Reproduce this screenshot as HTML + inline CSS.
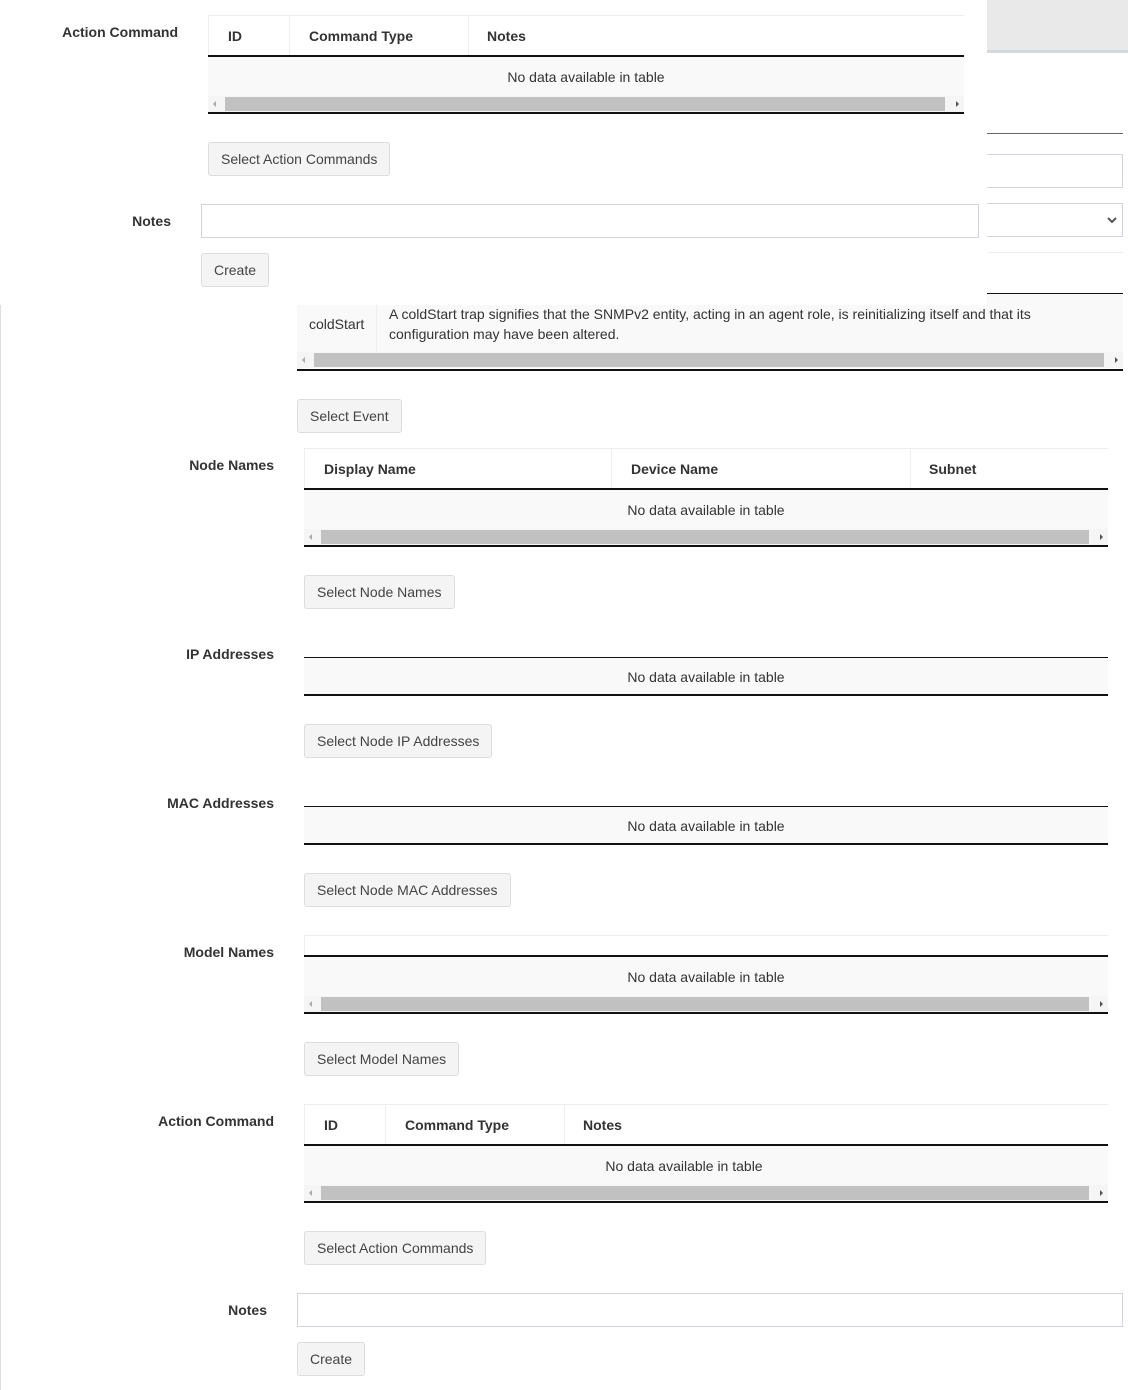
<!DOCTYPE html>
<html><head><meta charset="utf-8"><style>
*{box-sizing:border-box;margin:0;padding:0}
body{width:1128px;height:1390px;position:relative;background:#fff;font-family:"Liberation Sans",Arial,sans-serif;font-size:14px;color:#333;overflow:hidden}
.a{position:absolute}
.lbl{position:absolute;font-weight:bold;text-align:right;color:#333}
.btn{position:absolute;height:34px;background:#f4f4f4;border:1px solid #ddd;border-radius:3px;line-height:32px;padding:0 12px;color:#444;white-space:nowrap}
.th{position:absolute;font-weight:bold;color:#333}
.row{position:absolute;background:#f9f9f9;text-align:center;color:#333}
.sb{position:absolute;height:16px;background:#f5f5f5}
.sb .t{position:absolute;left:17px;right:19px;top:1px;height:14px;background:#c1c1c1}
.sb .l{position:absolute;left:5px;top:5px;border:3px solid transparent;border-right:3px solid #aaa;border-left:0}
.sb .r{position:absolute;right:5px;top:5px;border:3px solid transparent;border-left:3px solid #555;border-right:0}
.dk{position:absolute;height:2px;background:#111}
.lt{position:absolute;height:1px;background:#eee}
.vs{position:absolute;width:1px;background:#eee}
.inp{position:absolute;border:1px solid #d0d3da;background:#fff}
</style></head><body>

<div class="a" style="left:987px;top:0;width:141px;height:50px;background:#e9e9e9"></div>
<div class="a" style="left:987px;top:50px;width:141px;height:3px;background:#d3d9e1"></div>
<div class="a" style="left:987px;top:133px;width:136px;height:1px;background:#666"></div>
<div class="inp" style="left:980px;top:154px;width:143px;height:34px"></div>
<div class="inp" style="left:980px;top:203px;width:143px;height:34px"></div>
<svg class="a" style="left:1107px;top:216px" width="10" height="8" viewBox="0 0 10 8"><path d="M1 2 L5 6 L9 2" stroke="#555" stroke-width="2" fill="none"/></svg>
<div class="a" style="left:987px;top:252px;width:136px;height:1px;background:#eee"></div>
<div class="a" style="left:987px;top:293px;width:136px;height:1px;background:#111"></div>
<div class="a" style="left:0;top:305px;width:1px;height:1085px;background:#ddd"></div>

<div class="row" style="left:297px;top:294px;width:826px;height:58px"></div>
<div class="vs" style="left:376px;top:305px;height:47px"></div>
<div class="a" style="left:309px;top:316px">coldStart</div>
<div class="a" style="left:389px;top:304px;width:700px;line-height:20px">A coldStart trap signifies that the SNMPv2 entity, acting in an agent role, is reinitializing itself and that its configuration may have been altered.</div>
<div class="sb" style="left:297px;top:352px;width:826px"><div class="t"></div><div class="l"></div><div class="r"></div></div>
<div class="dk" style="left:297px;top:369px;width:826px"></div>

<div class="a" style="left:0;top:0;width:987px;height:305px;background:#fff"></div>
<div class="lbl" style="left:40px;top:24px;width:138px">Action Command</div>
<div class="lt" style="left:208px;top:15px;width:756px"></div>
<div class="vs" style="left:208px;top:15px;height:41px"></div>
<div class="vs" style="left:289px;top:15px;height:41px"></div>
<div class="vs" style="left:468px;top:15px;height:41px"></div>
<div class="th" style="left:228px;top:28px">ID</div>
<div class="th" style="left:309px;top:28px">Command Type</div>
<div class="th" style="left:487px;top:28px">Notes</div>
<div class="dk" style="left:208px;top:55px;width:756px"></div>
<div class="row" style="left:208px;top:57px;width:756px;height:39px;line-height:40px">No data available in table</div>
<div class="sb" style="left:208px;top:96px;width:756px"><div class="t"></div><div class="l"></div><div class="r"></div></div>
<div class="dk" style="left:208px;top:112px;width:756px"></div>
<div class="btn" style="left:208px;top:142px">Select Action Commands</div>
<div class="lbl" style="left:60px;top:213px;width:111px">Notes</div>
<div class="inp" style="left:201px;top:204px;width:778px;height:34px"></div>
<div class="btn" style="left:201px;top:253px">Create</div>

<div class="btn" style="left:297px;top:399px">Select Event</div>

<div class="lbl" style="left:100px;top:457px;width:174px">Node Names</div>
<div class="lt" style="left:304px;top:448px;width:804px"></div>
<div class="vs" style="left:304px;top:448px;height:41px"></div>
<div class="vs" style="left:611px;top:448px;height:41px"></div>
<div class="vs" style="left:910px;top:448px;height:41px"></div>
<div class="th" style="left:324px;top:461px">Display Name</div>
<div class="th" style="left:631px;top:461px">Device Name</div>
<div class="th" style="left:929px;top:461px">Subnet</div>
<div class="dk" style="left:304px;top:488px;width:804px"></div>
<div class="row" style="left:304px;top:490px;width:804px;height:39px;line-height:40px">No data available in table</div>
<div class="sb" style="left:304px;top:529px;width:804px"><div class="t"></div><div class="l"></div><div class="r"></div></div>
<div class="dk" style="left:304px;top:545px;width:804px"></div>
<div class="btn" style="left:304px;top:575px">Select Node Names</div>

<div class="lbl" style="left:100px;top:646px;width:174px">IP Addresses</div>
<div class="a" style="left:304px;top:657px;width:804px;height:1px;background:#111"></div>
<div class="row" style="left:304px;top:658px;width:804px;height:37px;line-height:38px">No data available in table</div>
<div class="a" style="left:304px;top:694px;width:804px;height:2px;background:#111"></div>
<div class="btn" style="left:304px;top:724px">Select Node IP Addresses</div>

<div class="lbl" style="left:100px;top:795px;width:174px">MAC Addresses</div>
<div class="a" style="left:304px;top:806px;width:804px;height:1px;background:#111"></div>
<div class="row" style="left:304px;top:807px;width:804px;height:37px;line-height:38px">No data available in table</div>
<div class="a" style="left:304px;top:843px;width:804px;height:2px;background:#111"></div>
<div class="btn" style="left:304px;top:873px">Select Node MAC Addresses</div>

<div class="lbl" style="left:100px;top:944px;width:174px">Model Names</div>
<div class="lt" style="left:304px;top:935px;width:804px"></div>
<div class="vs" style="left:304px;top:935px;height:21px"></div>
<div class="dk" style="left:304px;top:955px;width:804px"></div>
<div class="row" style="left:304px;top:957px;width:804px;height:39px;line-height:40px">No data available in table</div>
<div class="sb" style="left:304px;top:996px;width:804px"><div class="t"></div><div class="l"></div><div class="r"></div></div>
<div class="dk" style="left:304px;top:1012px;width:804px"></div>
<div class="btn" style="left:304px;top:1042px">Select Model Names</div>

<div class="lbl" style="left:100px;top:1113px;width:174px">Action Command</div>
<div class="lt" style="left:304px;top:1104px;width:804px"></div>
<div class="vs" style="left:304px;top:1104px;height:41px"></div>
<div class="vs" style="left:385px;top:1104px;height:41px"></div>
<div class="vs" style="left:564px;top:1104px;height:41px"></div>
<div class="th" style="left:324px;top:1117px">ID</div>
<div class="th" style="left:405px;top:1117px">Command Type</div>
<div class="th" style="left:583px;top:1117px">Notes</div>
<div class="dk" style="left:304px;top:1144px;width:804px"></div>
<div class="row" style="left:304px;top:1146px;width:760px;height:39px;line-height:40px">No data available in table</div>
<div class="a" style="left:1064px;top:1146px;width:44px;height:39px;background:#f9f9f9"></div>
<div class="sb" style="left:304px;top:1185px;width:804px"><div class="t"></div><div class="l"></div><div class="r"></div></div>
<div class="dk" style="left:304px;top:1201px;width:804px"></div>
<div class="btn" style="left:304px;top:1231px">Select Action Commands</div>
<div class="lbl" style="left:150px;top:1302px;width:117px">Notes</div>
<div class="inp" style="left:297px;top:1293px;width:826px;height:34px"></div>
<div class="btn" style="left:297px;top:1342px">Create</div>

</body></html>
